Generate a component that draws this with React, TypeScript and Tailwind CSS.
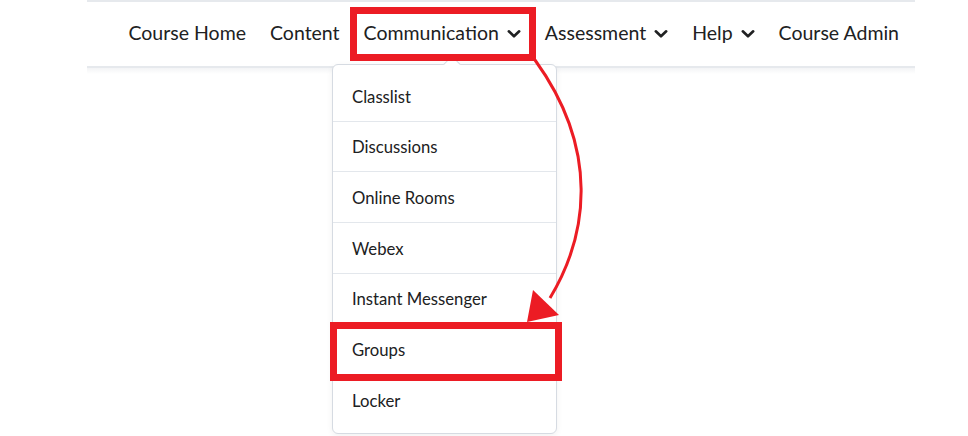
const NAV = [
  { label: "Course Home", menu: false },
  { label: "Content", menu: false },
  { label: "Communication", menu: true },
  { label: "Assessment", menu: true },
  { label: "Help", menu: true },
  { label: "Course Admin", menu: false },
];

const MENU_ITEMS = [
  "Classlist",
  "Discussions",
  "Online Rooms",
  "Webex",
  "Instant Messenger",
  "Groups",
  "Locker",
];

function Chevron() {
  return (
    <svg width="14" height="14" viewBox="0 0 14 14" className="mt-[3px]">
      <path d="M1.8 4.3 L7 9.3 L12.2 4.3" fill="none" stroke="#202122" strokeWidth="2.6" strokeLinecap="round" strokeLinejoin="round" />
    </svg>
  );
}

export default function App() {
  return (
    <div className="relative w-[968px] h-[436px] overflow-hidden bg-white text-[#202122] [font-family:Lato,'Noto_Sans',sans-serif]">
      {/* top navigation bar */}
      <div className="mx-[87px] w-[828px] h-[68px] border-t-2 border-b-2 border-[#e6e9ed] flex items-center justify-end pr-[16px]">
        <nav className="flex items-center gap-[24px] text-[19.5px] leading-none -mt-[3px]">
          {NAV.map((n) => (
            <div key={n.label} className="flex items-center gap-[8px]">
              <span>{n.label}</span>
              {n.menu && <Chevron />}
            </div>
          ))}
        </nav>
      </div>
      <div className="mx-[87px] w-[828px] h-[6px] bg-gradient-to-b from-[#f3f4f6] to-white" />

      {/* Communication dropdown */}
      <div className="absolute left-[332px] top-[64px] w-[225px] h-[370px] bg-white border border-[#d6dbe2] rounded-[6px] shadow-[0_2px_6px_rgba(0,0,0,0.06)] pt-[6px]">
        <div className="absolute -top-[7px] left-[113px] w-[12px] h-[12px] rotate-45 bg-white border-l border-t border-[#d6dbe2]" />
        <ul className="relative flex flex-col text-[16.7px]">
          {MENU_ITEMS.map((item, i) => (
            <li
              key={item}
              className={`h-[50.67px] flex items-center pl-[19px] pt-[3px] ${i < MENU_ITEMS.length - 1 ? "border-b border-[#e3e7ec]" : ""}`}
            >
              {item}
            </li>
          ))}
        </ul>
      </div>

      {/* highlight boxes */}
      <div className="absolute left-[350px] top-[7px] w-[186px] h-[54px] border-[7px] border-[#ec1c24]" />
      <div className="absolute left-[330px] top-[322px] w-[232px] h-[59px] border-[7px] border-[#ec1c24]" />

      {/* curved arrow */}
      <svg className="absolute left-0 top-0 pointer-events-none" width="968" height="436" viewBox="0 0 968 436">
        <path d="M535 60 C600 150 588 235 550 298" fill="none" stroke="#ec1c24" strokeWidth="3" />
        <polygon points="533,290 559,315 527,322" fill="#ec1c24" />
      </svg>
    </div>
  );
}
